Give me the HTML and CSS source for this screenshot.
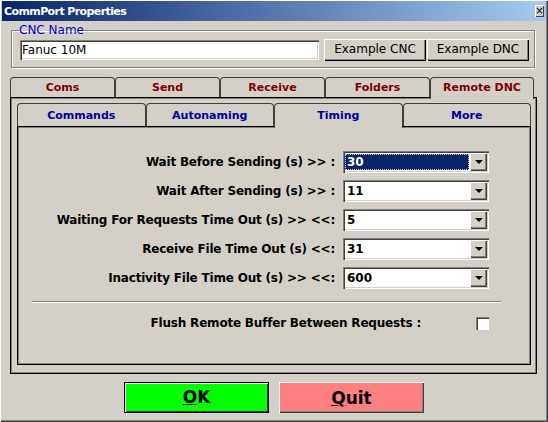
FILE: index.html
```html
<!DOCTYPE html>
<html lang="en">

<head>
    <meta charset="UTF-8">
    <meta name="viewport" content="width=device-width, initial-scale=1.0">

    <title>CommPort Properties</title>
    <link rel="stylesheet" href="styles.css">
</head>

<body>
    <div class="window">
        <div class="titlebar">
            <span class="title">CommPort Properties</span>
            <span class="close">×</span>
        </div>

        <fieldset class="group">
            <legend>CNC Name</legend>
            <div class="group-row">
                <div class="textbox">Fanuc 10M</div>
                <div class="btn first">Example CNC</div>
                <div class="btn">Example DNC</div>
            </div>
        </fieldset>

        <div class="sheet">
            <div class="tabs outer">
                <div class="tab">Coms</div>
                <div class="tab">Send</div>
                <div class="tab">Receive</div>
                <div class="tab">Folders</div>
                <div class="tab active">Remote DNC</div>
            </div>

            <div class="panel outer-panel">
                <div class="tabs inner">
                    <div class="tab">Commands</div>
                    <div class="tab">Autonaming</div>
                    <div class="tab active">Timing</div>
                    <div class="tab">More</div>
                </div>

                <div class="panel inner-panel">
                    <div class="form">
                        <label>Wait Before Sending (s) &gt;&gt; :</label>
                        <div class="combo focus"><span class="value">30</span><span class="arrow"></span></div>

                        <label>Wait After Sending (s) &gt;&gt; :</label>
                        <div class="combo"><span class="value">11</span><span class="arrow"></span></div>

                        <label>Waiting For Requests Time Out (s) &gt;&gt; &lt;&lt;:</label>
                        <div class="combo"><span class="value">5</span><span class="arrow"></span></div>

                        <label>Receive File Time Out (s) &lt;&lt;:</label>
                        <div class="combo"><span class="value">31</span><span class="arrow"></span></div>

                        <label>Inactivity File Time Out (s) &gt;&gt; &lt;&lt;:</label>
                        <div class="combo"><span class="value">600</span><span class="arrow"></span></div>
                    </div>

                    <div class="sep"></div>

                    <div class="check-row">
                        <label>Flush Remote Buffer Between Requests :</label>
                        <span class="check"></span>
                    </div>
                </div>
            </div>
        </div>

        <div class="actions">
            <div class="big ok"><u>O</u>K</div>
            <div class="big quit"><u>Q</u>uit</div>
        </div>
    </div>
</body>

</html>
```

FILE: styles.css
```css
body {
    margin: 0;
    background: #d4d0c8;
    font-family: "DejaVu Sans", sans-serif;
    font-size: 12px;
    color: #000;
}

.window {
    width: 548px;
    height: 422px;
    box-sizing: border-box;
    padding: 1px 2px 2px 2px;
    box-shadow: inset 1px 1px #ffffff, inset -1px -1px #404040, inset -2px -2px #808080;
}

.titlebar {
    height: 20px;
    display: flex;
    align-items: center;
    justify-content: space-between;
    padding: 0 2px;
    background: linear-gradient(to right, #0a246a, #a6caf0);
    color: #fff;
}

.title {
    font-weight: bold;
    font-size: 11px;
    letter-spacing: -0.6px;
}

.close {
    width: 9px;
    height: 12px;
    box-sizing: border-box;
    background: #d4d0c8;
    color: #000;
    font-size: 10px;
    line-height: 11px;
    text-align: center;
    box-shadow: inset 1px 1px #fff, inset -1px -1px #404040;
}

/* CNC name group */

.group {
    margin: 2px 11px 0 9px;
    padding: 3px 5px 7px 8px;
    border: 1px solid #808080;
    box-shadow: inset 1px 1px #fff, 1px 1px #fff;
}

.group legend {
    padding: 0;
    margin-left: -1px;
    line-height: 14px;
    color: #0000cc;
    font-size: 12px;
}

.group-row {
    display: flex;
    align-items: center;
    height: 20px;
}

.textbox {
    flex: 1;
    height: 20px;
    box-sizing: border-box;
    padding: 0 2px;
    line-height: 20px;
    background: #fff;
    box-shadow: inset 1px 1px #808080, inset 2px 2px #404040, inset -1px -1px #fff, inset -2px -2px #d4d0c8;
}

.btn {
    width: 102px;
    height: 22px;
    box-sizing: border-box;
    margin-left: 1px;
    line-height: 21px;
    text-align: center;
    box-shadow: inset 1px 1px #fff, inset -1px -1px #000, inset -2px -2px #808080;
}

.btn.first {
    margin-left: 5px;
}

/* tabs */

.sheet {
    margin: 9px 9px 0 8px;
}

.tabs {
    display: flex;
}

.tab {
    box-sizing: border-box;
    border: 1px solid #404040;
    border-bottom: none;
    border-radius: 4px 4px 0 0;
    text-align: center;
    font-weight: bold;
    font-size: 11px;
    background: #d4d0c8;
}

.tab.active {
    position: relative;
    z-index: 1;
}

.outer .tab {
    width: 105px;
    height: 20px;
    line-height: 19px;
    color: #800000;
}

.outer .tab.active {
    width: 104px;
    height: 22px;
    margin-bottom: -2px;
}

.inner .tab {
    flex: 1;
    height: 23px;
    line-height: 23px;
    color: #00009c;
}

.inner .tab.active {
    height: 25px;
    margin-bottom: -2px;
}

.panel {
    border: 1px solid #000;
    box-shadow: inset 1px 1px #808080, inset -1px -1px #808080;
}

.outer-panel {
    height: 277px;
    box-sizing: border-box;
    padding: 5px 5px 8px 6px;
}

.inner-panel {
    height: 239px;
    box-sizing: border-box;
    padding-top: 24px;
}

/* timing form */

.form {
    display: grid;
    grid-template-columns: 1fr 146px;
    grid-auto-rows: 22px;
    column-gap: 8px;
    row-gap: 7px;
    padding-right: 41px;
}

.form label,
.check-row label {
    font-weight: bold;
    text-align: right;
    align-self: center;
    letter-spacing: -0.2px;
}

.combo {
    display: flex;
    box-sizing: border-box;
    padding: 2px;
    background: #fff;
    box-shadow: inset 1px 1px #808080, inset 2px 2px #404040, inset -1px -1px #fff, inset -2px -2px #d4d0c8;
}

.value {
    flex: 1;
    padding-left: 2px;
    line-height: 18px;
    font-weight: bold;
}

.combo.focus .value {
    margin: 1px 1px 1px 0;
    line-height: 16px;
    background: #0a246a;
    color: #fff;
    outline: 1px dotted #c8c8c8;
    outline-offset: -1px;
}

.arrow {
    width: 17px;
    display: flex;
    align-items: center;
    justify-content: center;
    background: #d4d0c8;
    box-shadow: inset 1px 1px #fff, inset -1px -1px #404040, inset -2px -2px #808080;
}

.arrow::after {
    content: "";
    border-left: 4px solid transparent;
    border-right: 4px solid transparent;
    border-top: 4px solid #000;
}

.sep {
    margin: 12px 29px 0 14px;
    border-top: 1px solid #808080;
    border-bottom: 1px solid #fff;
}

.check-row {
    display: flex;
    justify-content: flex-end;
    align-items: center;
    margin-top: 13px;
    padding-right: 41px;
}

.check-row label {
    margin-right: 55px;
}

.check {
    width: 13px;
    height: 13px;
    box-sizing: border-box;
    background: #fff;
    box-shadow: inset 1px 1px #808080, inset 2px 2px #404040, inset -1px -1px #fff;
}

/* bottom buttons */

.actions {
    display: flex;
    justify-content: center;
    gap: 10px;
    margin-top: 8px;
}

.big {
    width: 145px;
    height: 31px;
    box-sizing: border-box;
    text-align: center;
    line-height: 29px;
    font-weight: bold;
    font-size: 17px;
}

.ok {
    background: #00ff00;
    border: 1px solid #000;
    box-shadow: inset 1px 1px #fff, inset -1px -1px #404040;
}

.quit {
    background: #ff8080;
    box-shadow: inset 1px 1px #fff, inset -1px -1px #404040, inset -2px -2px #808080;
    line-height: 32px;
}
```
